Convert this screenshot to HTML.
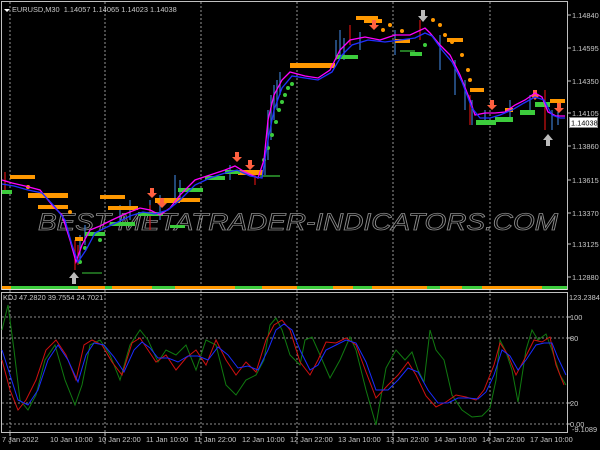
<!DOCTYPE html>
<html><head><meta charset="utf-8"><style>
html,body{margin:0;padding:0;background:#000;width:600px;height:450px;overflow:hidden}
svg{display:block}
text{font-family:"Liberation Sans",sans-serif;font-size:7.4px;fill:#c8c8c8}
</style></head><body>
<svg width="600" height="450" viewBox="0 0 600 450" xmlns="http://www.w3.org/2000/svg">
<rect width="600" height="450" fill="#000"/>
<rect x="1.5" y="1.5" width="566" height="288" fill="none" stroke="#c0c0c0" stroke-width="1"/>
<rect x="1.5" y="292.5" width="566" height="140" fill="none" stroke="#c0c0c0" stroke-width="1"/>
<g stroke="#bbb" stroke-dasharray="2,2" stroke-width="0.8">
<line x1="10" y1="2" x2="10" y2="444"/><line x1="105" y1="2" x2="105" y2="444"/>
<line x1="201" y1="2" x2="201" y2="444"/><line x1="297" y1="2" x2="297" y2="444"/>
<line x1="393" y1="2" x2="393" y2="444"/><line x1="490" y1="2" x2="490" y2="444"/>
<line x1="2" y1="317" x2="567" y2="317"/><line x1="2" y1="338" x2="567" y2="338"/>
<line x1="2" y1="403" x2="567" y2="403"/><line x1="2" y1="424" x2="567" y2="424"/>
</g>
<text x="38" y="230" textLength="520" lengthAdjust="spacingAndGlyphs" style="font-size:24px;font-style:italic;fill:none;stroke:#8a8a8a;stroke-width:0.8">BEST-METATRADER-INDICATORS.COM</text>
<g stroke="#3a78c8" stroke-width="1.2">
<path d="M265,150V175M268,110V160M271,95V140M274,85V120M277,80V110M280,72V95M336,40V60M340,30V55M344,38V60M360,32V50M395,30V55M440,35V70M455,60V95M465,80V110M472,100V125M485,110V125M510,100V120M530,95V110M552,110V130M558,112V125M150,200V225M160,195V220M175,175V200M180,180V200M230,165V180M120,205V225M130,200V220M85,225V245M80,235V260"/>
</g>
<g stroke="#d01010" stroke-width="1.2">
<path d="M5,172V190M75,240V270M78,245V265M350,25V45M420,20V40M470,95V125M545,90V130M255,170V185M150,205V230"/>
</g>
<g fill="#ff9800">
<rect x="10" y="175" width="25" height="4"/><rect x="28" y="193" width="40" height="5"/><rect x="38" y="205" width="30" height="4"/>
<rect x="100" y="195" width="25" height="4"/><rect x="108" y="206" width="30" height="4"/><rect x="155" y="198" width="25" height="5"/>
<rect x="180" y="198" width="20" height="4"/><rect x="238" y="170" width="25" height="5"/>
<rect x="290" y="63" width="45" height="5"/><rect x="356" y="16" width="22" height="4"/><rect x="364" y="19" width="18" height="4"/>
<rect x="395" y="39" width="15" height="4"/><rect x="447" y="38" width="16" height="4"/><rect x="470" y="88" width="14" height="4"/>
<rect x="550" y="99" width="15" height="4"/><rect x="505" y="108" width="8" height="4"/>
<rect x="75" y="237" width="8" height="4"/>
<circle cx="390" cy="25" r="2"/><circle cx="383" cy="30" r="2"/><circle cx="402" cy="31" r="2"/><circle cx="433" cy="20" r="2"/><circle cx="440" cy="25" r="2"/><circle cx="445" cy="35" r="2"/><circle cx="452" cy="42" r="2"/><circle cx="462" cy="55" r="2"/><circle cx="468" cy="70" r="2"/><circle cx="470" cy="80" r="2"/><circle cx="28" cy="187" r="2"/><circle cx="70" cy="212" r="2"/>
</g>
<g fill="#3ccc3c">
<rect x="2" y="190" width="10" height="4"/><rect x="85" y="232" width="20" height="4"/><rect x="110" y="222" width="25" height="4"/><rect x="138" y="212" width="25" height="4"/><rect x="178" y="188" width="25" height="4"/><rect x="205" y="176" width="20" height="4"/><rect x="225" y="170" width="15" height="4"/>
<rect x="336" y="55" width="22" height="4"/><rect x="410" y="52" width="12" height="4"/><rect x="476" y="120" width="20" height="5"/><rect x="495" y="117" width="18" height="5"/><rect x="520" y="110" width="15" height="5"/><rect x="535" y="102" width="15" height="5"/>
<circle cx="80" cy="262" r="2"/><circle cx="85" cy="248" r="2"/><circle cx="100" cy="240" r="2"/><circle cx="264" cy="160" r="2"/><circle cx="268" cy="148" r="2"/><circle cx="272" cy="135" r="2"/><circle cx="276" cy="122" r="2"/><circle cx="279" cy="110" r="2"/><circle cx="282" cy="102" r="2"/><circle cx="285" cy="95" r="2"/><circle cx="288" cy="88" r="2"/><circle cx="292" cy="84" r="2"/><circle cx="425" cy="45" r="2"/>
<rect x="170" y="225" width="15" height="3"/><rect x="260" y="175" width="20" height="2" opacity="0.6"/><rect x="400" y="50" width="15" height="2" opacity="0.6"/><rect x="82" y="272" width="20" height="2" opacity="0.5"/>
</g>
<g fill="#ff6040">
<path d="M150,188h4v5h3l-5,5l-5,-5h3z"/><path d="M235,152h4v5h3l-5,5l-5,-5h3z"/><path d="M248,160h4v5h3l-5,5l-5,-5h3z"/><path d="M372,20h4v5h3l-5,5l-5,-5h3z"/><path d="M490,100h4v5h3l-5,5l-5,-5h3z"/><path d="M533,90h4v5h3l-5,5l-5,-5h3z"/><path d="M557,103h4v5h3l-5,5l-5,-5h3z"/><path d="M160,198h4v5h3l-5,5l-5,-5h3z"/>
</g>
<g fill="#bbb"><path d="M72,284h4v-6h3l-5,-6l-5,6h3z"/><path d="M546,146h4v-6h3l-5,-6l-5,6h3z"/><path d="M421,10h4v6h3l-5,6l-5,-6h3z"/></g>
<polyline fill="none" stroke="#ff00ff" stroke-width="1.3" points="2,180 12,183 25,186 40,190 52,205 62,215 70,240 76,262 82,245 90,230 100,226 112,220 125,214 140,208 150,210 160,215 170,208 180,195 195,180 210,175 225,170 235,166 245,172 258,178 264,160 268,120 274,95 282,80 290,72 305,76 318,78 330,70 340,50 350,40 365,37 380,40 395,35 410,35 425,28 430,33 440,45 450,55 460,75 470,100 475,115 485,113 495,113 505,112 515,105 525,100 535,93 542,97 548,112 556,116 565,116"/>
<polyline fill="none" stroke="#2030ff" stroke-width="1.3" points="2,184 14,186 28,190 42,193 55,207 65,220 72,245 78,262 86,250 95,233 105,228 118,222 130,216 143,212 155,214 168,210 180,200 195,185 210,178 225,173 237,170 250,176 262,178 268,140 274,110 282,88 292,76 305,78 318,80 332,72 342,55 352,45 368,40 385,42 400,40 415,38 425,33 432,36 442,50 452,62 462,82 472,108 480,118 490,118 500,115 512,110 524,103 535,97 544,100 552,115 560,118 565,118"/>
<rect x="2" y="286" width="565" height="3" fill="#3ccc3c"/>
<g fill="#ff9800"><rect x="2" y="286" width="9" height="3"/><rect x="78" y="286" width="27" height="3"/><rect x="112" y="286" width="40" height="3"/><rect x="175" y="286" width="60" height="3"/><rect x="262" y="286" width="35" height="3"/><rect x="333" y="286" width="20" height="3"/><rect x="372" y="286" width="55" height="3"/><rect x="440" y="286" width="22" height="3"/><rect x="482" y="286" width="60" height="3"/></g>
<line x1="2" y1="289.5" x2="567" y2="289.5" stroke="#e0e0e0" stroke-width="1"/>
<polyline fill="none" stroke="#107a10" stroke-width="1" points="2,330 8,305 14,350 20,400 28,410 36,395 45,360 55,345 65,380 75,405 82,385 90,345 100,340 110,355 120,380 130,345 140,330 148,340 158,362 166,350 176,355 186,345 196,370 206,340 216,345 226,385 236,395 246,380 256,375 264,360 270,325 276,318 282,330 290,355 300,365 305,340 312,337 320,355 330,378 340,360 350,337 356,350 366,390 376,425 386,368 396,350 405,360 412,352 418,370 424,382 430,330 436,350 444,360 452,395 462,410 472,417 482,416 490,408 496,380 500,340 506,352 512,370 518,402 526,350 532,330 538,340 546,334 552,350 560,375 566,385"/>
<polyline fill="none" stroke="#d01010" stroke-width="1" points="2,360 10,390 18,410 26,400 36,380 46,350 56,340 66,355 76,380 84,345 92,340 102,345 112,362 122,375 132,343 140,338 148,350 156,362 166,355 176,370 186,358 196,350 206,365 216,340 226,360 236,375 246,362 256,372 266,340 274,325 282,320 290,330 300,362 310,375 318,360 326,342 336,343 346,338 356,345 366,372 376,398 388,385 398,375 408,362 416,375 426,396 436,407 446,402 456,395 466,397 476,400 484,390 494,365 500,343 508,355 516,375 524,360 534,340 542,342 550,337 556,365 564,385"/>
<polyline fill="none" stroke="#1a2cff" stroke-width="1" points="2,350 10,375 18,400 28,405 38,390 48,360 58,345 68,360 78,382 86,355 94,343 104,345 114,357 124,372 134,350 142,342 150,348 158,358 168,358 178,362 188,356 198,356 208,360 218,347 228,355 238,368 248,366 258,370 268,350 276,330 284,324 292,330 300,350 310,370 318,365 326,350 336,345 346,340 356,343 366,362 376,390 388,390 398,380 408,368 418,372 428,390 438,403 448,403 458,398 468,398 478,399 486,392 494,375 502,350 510,356 518,370 526,360 536,345 544,343 552,343 558,358 566,375"/>
<path d="M4,9l3,3l3,-3z" fill="#fff"/>
<text x="12" y="12">EURUSD,M30&#160; 1.14057 1.14065 1.14023 1.14038</text>
<text x="3" y="300">KDJ 47.2820 39.7554 24.7021</text>
<g>
<text x="572" y="18">1.14840</text><text x="572" y="51">1.14595</text><text x="572" y="84">1.14350</text><text x="572" y="116">1.14105</text>
<text x="572" y="149">1.13860</text><text x="572" y="183">1.13615</text><text x="572" y="216">1.13370</text><text x="572" y="247">1.13125</text><text x="572" y="280">1.12880</text>
<text x="569" y="300">123.2384</text><text x="570" y="320">100</text><text x="570" y="341">80</text><text x="570" y="406">20</text><text x="570" y="427">0.00</text><text x="572" y="432">-9.1089</text>
</g>
<rect x="569.5" y="117.5" width="28" height="10" fill="#fff" stroke="#888"/>
<text x="571" y="125.5" style="fill:#000">1.14038</text>
<g stroke="#c0c0c0"><path d="M568,15h3M568,48h3M568,81h3M568,113h3M568,146h3M568,180h3M568,213h3M568,244h3M568,277h3M568,317h3M568,338h3M568,403h3M568,424h3M10,433v3M105,433v3M201,433v3M297,433v3M393,433v3M490,433v3"/></g>
<g>
<text x="2" y="442">7 Jan 2022</text><text x="50" y="442">10 Jan 10:00</text><text x="98" y="442">10 Jan 22:00</text><text x="146" y="442">11 Jan 10:00</text>
<text x="194" y="442">11 Jan 22:00</text><text x="242" y="442">12 Jan 10:00</text><text x="290" y="442">12 Jan 22:00</text><text x="338" y="442">13 Jan 10:00</text>
<text x="386" y="442">13 Jan 22:00</text><text x="434" y="442">14 Jan 10:00</text><text x="482" y="442">14 Jan 22:00</text><text x="530" y="442">17 Jan 10:00</text>
</g>
</svg>
</body></html>
